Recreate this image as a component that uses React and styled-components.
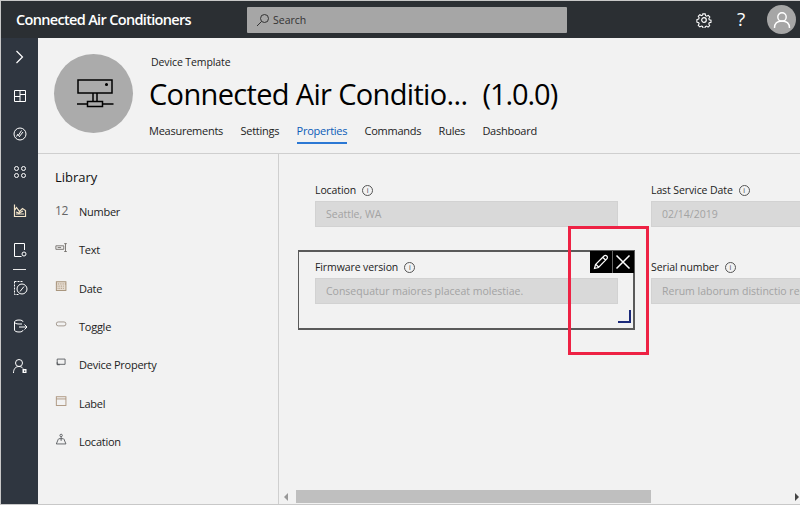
import React from "react";
import styled, { createGlobalStyle } from "styled-components";

const GlobalStyle = createGlobalStyle`
  html, body {
    margin: 0;
    padding: 0;
    background: #f2f2f2;
  }
  * {
    box-sizing: border-box;
  }
`;

const tabs = ["Measurements", "Settings", "Properties", "Commands", "Rules", "Dashboard"];

const Stroke = ({ size = 16, children, color = "#fff", width = 1 }) => (
  <svg width={size} height={size} viewBox="0 0 16 16" fill="none" stroke={color} strokeWidth={width}>
    {children}
  </svg>
);

const navIcons = [
  { top: 11, icon: <Stroke width={1.2}><path d="M4.500 2 L10.500 8 L4.500 14" /></Stroke> },
  { top: 23, icon: <Stroke><path d="M2.500 2.500h11v11h-11z M8 2.500v11 M2.500 8.500h5.500 M8 6.500h5.500" /></Stroke> },
  { top: 22, icon: <Stroke><circle cx="8" cy="8" r="6" /><path d="M9.500 4.500 L6 10 M11 6 L7 11 M4.500 10.500 L6 8" /></Stroke> },
  { top: 22, icon: <Stroke><circle cx="4.500" cy="4.500" r="2" /><circle cx="11.500" cy="4.500" r="2" /><circle cx="4.500" cy="11.500" r="2" /><circle cx="11.500" cy="11.500" r="2" /></Stroke> },
  { top: 23, icon: <Stroke color="#f3e4c8" width={1.200}><path d="M2.500 1.500v12h11v-6l-3-2-3 3-3-4-2 3" /><path d="M4 11h8M4 9l3 1 4-2" /></Stroke> },
  { top: 23, icon: <Stroke><path d="M12.500 8V1.500h-10v13h7" /><circle cx="12" cy="12" r="2" /></Stroke> },
  { top: 22, icon: <Stroke><path d="M2.500 1.500h8M2.500 1.500v13h4" strokeDasharray="2 1" /><circle cx="10" cy="9" r="5" /><path d="M12 6.500 L8 11.500" /></Stroke> },
  { top: 22, icon: <Stroke><path d="M2.500 4v8c0 1 1.500 2 4.500 2s4-1 4-2M2.500 4c0-1 1.500-2 4.500-2s4 1 4 2M2.500 4c0 1 1.500 2 4.500 2h3 M7 9h8M12.500 6.500L15 9l-2.500 2.500" /></Stroke> },
  { top: 24, icon: <Stroke><circle cx="7" cy="5" r="3.500" /><path d="M1.500 15c0-4 2-6.500 5.500-6.500 1.500 0 3 .5 4 2" /><rect x="10.500" y="11" width="4" height="4" fill="#fff" stroke="none" /><rect x="12" y="12.500" width="1.300" height="1.300" fill="#2f3640" stroke="none" /></Stroke> },
];

const libraryItems = [
  { label: "Number", icon: <NumberGlyph>12</NumberGlyph> },
  {
    label: "Text",
    icon: (
      <Stroke size={14} color="#6f6a66">
        <path d="M1 5.500h9v4h-9z M3 7.500h4 M12 3v9 M10.500 3h3 M10.500 12h3" />
      </Stroke>
    ),
  },
  {
    label: "Date",
    icon: (
      <Stroke size={14} color="#a08a70">
        <rect x="1.500" y="2" width="11" height="10" fill="#e6ddd2" />
        <path d="M1.500 4.500h11 M3 7h8 M3 9.500h8" strokeDasharray="1 1" />
      </Stroke>
    ),
  },
  {
    label: "Toggle",
    icon: (
      <Stroke size={14} color="#9a8f85">
        <rect x="1.500" y="4.500" width="11" height="4.500" rx="2.200" />
      </Stroke>
    ),
  },
  {
    label: "Device Property",
    icon: (
      <Stroke size={14} color="#55585c">
        <path d="M2.500 3.500h9v6h-9z M2.500 9.500h2.500 M2.500 7v3h3" />
      </Stroke>
    ),
  },
  {
    label: "Label",
    icon: (
      <Stroke size={14} color="#a89078">
        <rect x="1.500" y="2" width="11" height="10" />
        <path d="M1.500 4.500h11" />
      </Stroke>
    ),
  },
  {
    label: "Location",
    icon: (
      <Stroke size={14} color="#55585c">
        <circle cx="7" cy="2.800" r="1.400" />
        <path d="M7 4v5 M4.500 6.500h5 M4 6.500L1.500 12.500h11L10 6.500" />
      </Stroke>
    ),
  },
];

function NumberGlyph({ children }) {
  return <NumberText>{children}</NumberText>;
}

function Info() {
  return <InfoMark>i</InfoMark>;
}

function Field({ label, value, $lowered }) {
  return (
    <FieldBox $lowered={$lowered}>
      <FieldLabel>
        {label}
        <Info />
      </FieldLabel>
      <FieldInput>{value}</FieldInput>
    </FieldBox>
  );
}

export default function App() {
  return (
    <>
      <GlobalStyle />
      <Page>
        <TopBar>
          <AppName>Connected Air Conditioners</AppName>
          <SearchBox>
            <svg width="14" height="14" viewBox="0 0 14 14" fill="none" stroke="#333" strokeWidth="1">
              <circle cx="8.500" cy="5.500" r="4" />
              <path d="M5.500 8.500L1 13" />
            </svg>
            Search
          </SearchBox>
          <TopActions>
            <svg width="16" height="16" viewBox="0 0 16 16" fill="none" stroke="#fff" strokeWidth="1.200">
              <circle cx="8" cy="8" r="2.300" />
              <path d="M6.700 1.200h2.600l.4 2 1.300.6 1.800-1 1.700 1.900-1.100 1.700.4 1.300 2 .6v2.300l-2 .5-.5 1.300 1 1.800-1.800 1.700-1.700-1.100-1.300.5-.5 1.800H6.900l-.5-1.900-1.300-.5-1.700 1-1.800-1.800 1-1.700-.5-1.300-2-.5V7.500l2-.6.500-1.300-1-1.700 1.800-1.800 1.700 1 1.300-.5z" transform="translate(.8 .8) scale(.9)" />
            </svg>
            <HelpMark>?</HelpMark>
            <Avatar>
              <svg width="18" height="18" viewBox="0 0 18 18" fill="none" stroke="#fff" strokeWidth="1.400">
                <circle cx="9" cy="6" r="4.200" />
                <path d="M1.500 17c0-4.500 3-7 7.500-7s7.500 2.500 7.500 7" />
              </svg>
            </Avatar>
          </TopActions>
        </TopBar>
        <Body>
          <SideNav>
            {navIcons.map((item, i) => (
              <React.Fragment key={i}>
                {i === 6 && <NavRule />}
                <NavIcon $top={item.top}>{item.icon}</NavIcon>
              </React.Fragment>
            ))}
          </SideNav>
          <Main>
            <Header>
              <DeviceCircle>
                <svg width="37" height="29" viewBox="0 0 37 29" fill="none" stroke="#000" strokeWidth="1.500">
                  <rect x="1" y="1" width="34" height="13" />
                  <circle cx="29.500" cy="5.500" r="0.800" fill="#000" />
                  <path d="M16 14v8 M20 14v8 M10.500 22.500h15v5h-15z M0 25h10.500 M25.500 25h11" />
                </svg>
              </DeviceCircle>
              <HeaderText>
                <Eyebrow>Device Template</Eyebrow>
                <TitleRow>
                  <Title>Connected Air Conditio...</Title>
                  <Version>(1.0.0)</Version>
                </TitleRow>
                <Tabs>
                  {tabs.map((t) => (
                    <Tab key={t} $active={t === "Properties"}>
                      {t}
                    </Tab>
                  ))}
                </Tabs>
              </HeaderText>
            </Header>
            <Content>
              <Library>
                <LibraryTitle>Library</LibraryTitle>
                {libraryItems.map((item) => (
                  <LibraryRow key={item.label}>
                    <LibraryIcon>{item.icon}</LibraryIcon>
                    {item.label}
                  </LibraryRow>
                ))}
              </Library>
              <Canvas>
                <FormGrid>
                  <Field label="Location" value="Seattle, WA" />
                  <Field label="Last Service Date" value="02/14/2019" />
                  <Selected>
                    <Field label="Firmware version" value="Consequatur maiores placeat molestiae." />
                    <WidgetTools>
                      <ToolButton>
                        <svg width="16" height="16" viewBox="0 0 16 16" fill="none" stroke="#fff" strokeWidth="1.200">
                          <path d="M1.500 14.500l1-4L11 2c.8-.8 2-.8 2.800 0s.8 2 0 2.800L5.500 13.500z M3 10.500l2.500 2.500 M10 3.500l2.500 2.500" />
                        </svg>
                      </ToolButton>
                      <ToolButton>
                        <svg width="16" height="16" viewBox="0 0 16 16" fill="none" stroke="#fff" strokeWidth="1.500">
                          <path d="M1.500 1.500l13 13 M14.500 1.500l-13 13" />
                        </svg>
                      </ToolButton>
                    </WidgetTools>
                    <ResizeHandle />
                  </Selected>
                  <Field label="Serial number" value="Rerum laborum distinctio repudiandae." $lowered />
                </FormGrid>
                <Callout />
                <ScrollBar>
                  <ScrollArrow $left />
                  <ScrollThumb />
                  <ScrollArrow />
                </ScrollBar>
              </Canvas>
            </Content>
          </Main>
        </Body>
      </Page>
    </>
  );
}

const Page = styled.div`
  width: 800px;
  height: 505px;
  overflow: hidden;
  display: flex;
  flex-direction: column;
  background: #f2f2f2;
  border-top: 1px solid #c8c8c8;
  border-left: 1px solid #c8c8c8;
  border-bottom: 1px solid #c8c8c8;
  font-family: "Open Sans", "Noto Sans", sans-serif;
  color: #222;
`;

const TopBar = styled.header`
  flex: 0 0 37px;
  display: flex;
  align-items: center;
  background: #2b2f33;
  color: #fff;
`;

const AppName = styled.div`
  width: 246px;
  padding-left: 15px;
  font-family: "Open Sans", sans-serif;
  font-size: 14.500px;
  font-weight: 600;
  letter-spacing: -0.67px;
  white-space: nowrap;
`;

const SearchBox = styled.div`
  width: 320px;
  height: 26px;
  display: flex;
  align-items: center;
  gap: 3px;
  padding-left: 9px;
  background: #a6a6a6;
  border-radius: 1px;
  color: #333;
  font-size: 10.500px;
`;

const TopActions = styled.div`
  margin-left: auto;
  display: flex;
  align-items: center;
  padding-right: 4px;
`;

const HelpMark = styled.span`
  margin: 0 20px 0 25px;
  width: 10px;
  font-size: 19px;
  color: #fff;
  line-height: 1;
`;

const Avatar = styled.div`
  width: 29px;
  height: 29px;
  border-radius: 50%;
  background: #a6a6a6;
  display: flex;
  align-items: center;
  justify-content: center;
`;

const Body = styled.div`
  flex: 1;
  min-height: 0;
  display: flex;
`;

const SideNav = styled.nav`
  flex: 0 0 37px;
  display: flex;
  flex-direction: column;
  align-items: center;
  background: #2f3640;
`;

const NavIcon = styled.div`
  margin-top: ${(props) => props.$top}px;
  height: 16px;
  display: flex;
  align-items: center;
  justify-content: center;
`;

const NavRule = styled.div`
  flex: 0 0 1px;
  width: 13px;
  margin-top: 11px;
  margin-bottom: -12px;
  background: #e8e8e8;
`;

const Main = styled.div`
  flex: 1;
  min-width: 0;
  display: flex;
  flex-direction: column;
`;

const Header = styled.div`
  flex: 0 0 116px;
  display: flex;
  padding: 16px 0 0 16px;
  border-bottom: 1px solid #cfcfcf;
`;

const DeviceCircle = styled.div`
  width: 79px;
  height: 79px;
  padding-left: 3px;
  border-radius: 50%;
  background: #ababab;
  display: flex;
  align-items: center;
  justify-content: center;
`;

const HeaderText = styled.div`
  margin-left: 16px;
  display: flex;
  flex-direction: column;
`;

const Eyebrow = styled.div`
  margin-top: 1px;
  padding-left: 2px;
  font-size: 10.500px;
  line-height: 15px;
  letter-spacing: -0.1px;
  color: #222;
`;

const TitleRow = styled.div`
  display: flex;
  align-items: baseline;
  margin-top: 4px;
  color: #000;
  font-size: 29px;
  line-height: 40px;
  white-space: nowrap;
`;

const Title = styled.span`
  letter-spacing: -0.66px;
`;

const Version = styled.span`
  margin-left: 15px;
  letter-spacing: -1.05px;
`;

const Tabs = styled.div`
  display: flex;
  gap: 17.300px;
  margin-top: 8px;
`;

const Tab = styled.div`
  height: 22px;
  font-size: 11px;
  font-weight: 500;
  line-height: 18px;
  letter-spacing: -0.25px;
  color: ${(props) => (props.$active ? "#0a5cb8" : "#222")};
  border-bottom: 2px solid ${(props) => (props.$active ? "#2b78d4" : "transparent")};
  white-space: nowrap;
`;

const Content = styled.div`
  flex: 1;
  min-height: 0;
  display: flex;
`;

const Library = styled.aside`
  flex: 0 0 241px;
  padding: 13px 0 0 17px;
  border-right: 1px solid #cfcfcf;
`;

const LibraryTitle = styled.div`
  margin-bottom: 5.500px;
  font-size: 13px;
  line-height: 20px;
  color: #111;
`;

const LibraryRow = styled.div`
  height: 38.330px;
  display: flex;
  align-items: center;
  font-size: 11px;
  letter-spacing: -0.25px;
  color: #222;
`;

const LibraryIcon = styled.span`
  width: 24px;
  display: flex;
  align-items: center;
  margin-top: -3px;
`;

const NumberText = styled.span`
  font-size: 12px;
  color: #666;
`;

const Canvas = styled.div`
  position: relative;
  flex: 1;
  min-width: 0;
  overflow: hidden;
`;

const FormGrid = styled.div`
  display: grid;
  grid-template-columns: 336px 303px;
  row-gap: 23px;
  align-items: start;
  padding: 27px 0 0 36px;
`;

const FieldBox = styled.div`
  width: 303px;
  margin-top: ${(props) => (props.$lowered ? "8px" : "0")};
`;

const FieldLabel = styled.div`
  height: 20px;
  padding-bottom: 2px;
  display: flex;
  align-items: center;
  gap: 6px;
  font-size: 10.500px;
  letter-spacing: -0.1px;
  color: #222;
`;

const InfoMark = styled.span`
  width: 11px;
  height: 11px;
  border: 1px solid #555;
  border-radius: 50%;
  font-size: 7px;
  line-height: 9px;
  text-align: center;
  color: #444;
`;

const FieldInput = styled.div`
  height: 26px;
  padding-left: 10px;
  display: flex;
  align-items: center;
  background: #d9d9d9;
  border: 1px solid #d2d2d2;
  font-size: 10.500px;
  color: #a3a3a3;
  white-space: nowrap;
  overflow: hidden;
`;

const Selected = styled.div`
  position: relative;
  margin-left: -17px;
  width: 337px;
  height: 80px;
  padding: 6px 0 0 16px;
  border: 1px solid #5a5a5a;
  border-width: 2px 2px 2px 1px;
`;

const WidgetTools = styled.div`
  position: absolute;
  top: -1px;
  right: -1px;
  display: flex;
  gap: 1px;
  background: #666;
`;

const ToolButton = styled.div`
  width: 21.500px;
  height: 22px;
  background: #000;
  display: flex;
  align-items: center;
  justify-content: center;
`;

const ResizeHandle = styled.div`
  position: absolute;
  right: 2px;
  bottom: 5px;
  width: 13px;
  height: 13px;
  border-right: 2px solid #1b2a7a;
  border-bottom: 2px solid #1b2a7a;
`;

const Callout = styled.div`
  position: absolute;
  left: 289px;
  top: 72px;
  width: 81px;
  height: 129px;
  border: 3px solid #ee2244;
`;

const ScrollBar = styled.div`
  position: absolute;
  left: 0;
  right: 0;
  bottom: 1px;
  height: 13px;
  display: flex;
  align-items: center;
  justify-content: space-between;
  padding: 0 1px 0 5px;
`;

const ScrollThumb = styled.div`
  position: absolute;
  left: 17px;
  top: 0;
  width: 355px;
  height: 13px;
  background: #bfbfbf;
`;

const ScrollArrow = styled.span`
  width: 0;
  height: 0;
  border-top: 4px solid transparent;
  border-bottom: 4px solid transparent;
  border-right: ${(props) => (props.$left ? "4px solid #999" : "none")};
  border-left: ${(props) => (props.$left ? "none" : "4px solid #444")};
`;
